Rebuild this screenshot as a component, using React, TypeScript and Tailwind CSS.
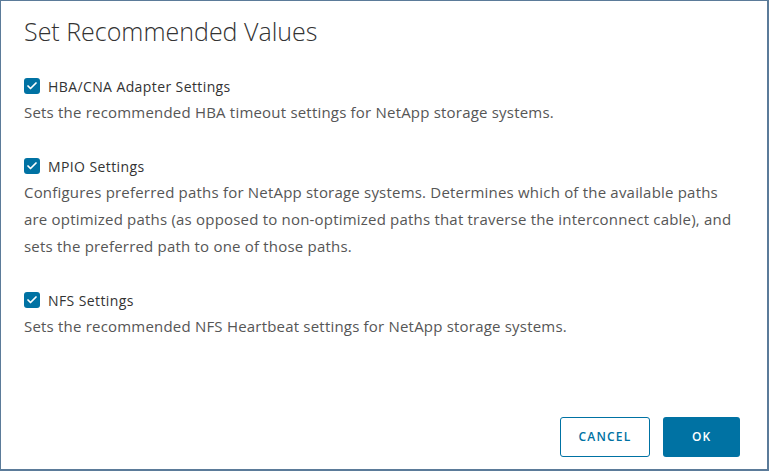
import { Check } from 'lucide-react';

const OPTIONS = [
  {
    label: 'HBA/CNA Adapter Settings',
    desc: 'Sets the recommended HBA timeout settings for NetApp storage systems.',
  },
  {
    label: 'MPIO Settings',
    desc: 'Configures preferred paths for NetApp storage systems. Determines which of the available paths are optimized paths (as opposed to non-optimized paths that traverse the interconnect cable), and sets the preferred path to one of those paths.',
  },
  {
    label: 'NFS Settings',
    desc: 'Sets the recommended NFS Heartbeat settings for NetApp storage systems.',
  },
];

export default function App() {
  return (
    <div
      className="w-[769px] h-[471px] bg-white border-l border-t border-r-2 border-b-2 border-[#5b7b99] flex flex-col"
      style={{ fontFamily: '"Open Sans", Lato, sans-serif' }}
    >
      <h1 className="pl-[23px] pt-[14px] text-[25px] font-light text-[#333] leading-[32px]">
        Set Recommended Values
      </h1>

      <div className="pl-[23px] pr-[30px] mt-[29px] flex flex-col gap-[30px]">
        {OPTIONS.map(({ label, desc }) => (
          <div key={label} className="flex flex-col">
            <label className="flex items-center gap-2 h-[20px]">
              <span className="w-4 h-4 rounded-[3px] bg-[#0072a3] flex items-center justify-center">
                <Check size={12} strokeWidth={3.5} className="text-white" />
              </span>
              <span className="text-[14px] tracking-[0.4px] text-[#333]">{label}</span>
            </label>
            <p className="mt-[3px] text-[15px] tracking-[0.2px] leading-[27px] text-[#565656]">{desc}</p>
          </div>
        ))}
      </div>

      <div className="mt-auto mb-[12px] pr-[27px] flex justify-end gap-[13px]">
        <button className="w-[90px] h-[40px] rounded-[3px] border border-[#0072a3] text-[#0072a3] text-[12px] font-semibold tracking-[0.1em]">
          CANCEL
        </button>
        <button className="w-[77px] h-[40px] rounded-[3px] bg-[#0072a3] text-white text-[12px] font-semibold tracking-[0.08em]">
          OK
        </button>
      </div>
    </div>
  );
}
